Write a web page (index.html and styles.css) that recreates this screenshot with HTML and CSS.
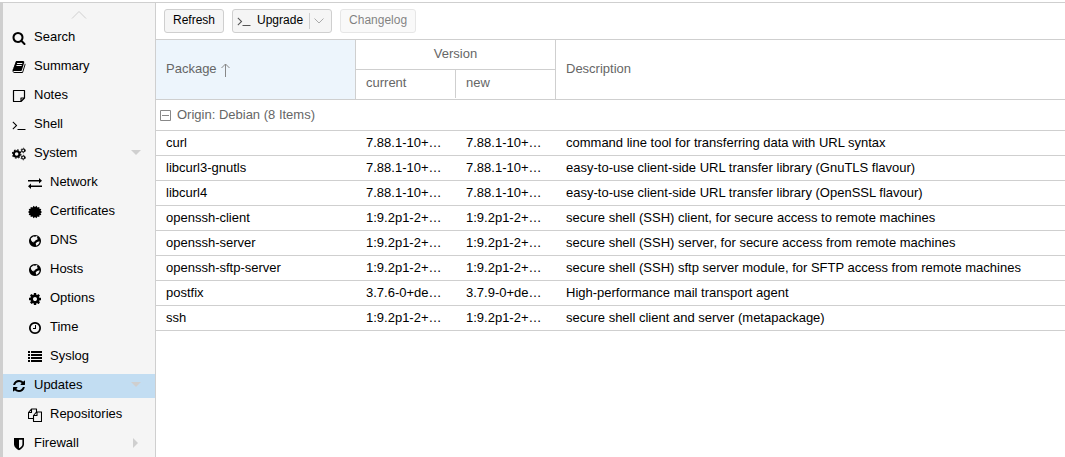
FILE: index.html
```html
<!DOCTYPE html>
<html lang="en">
<head>
<meta charset="utf-8">
<title>Updates</title>
<link rel="stylesheet" href="styles.css">
</head>
<body>
<svg class="defs" aria-hidden="true">
  <symbol id="search" viewBox="0 0 1792 1792"><path d="M1216 832q0-185-131.500-316.500t-316.500-131.500-316.500 131.500-131.500 316.500 131.500 316.500 316.500 131.500 316.500-131.500 131.500-316.500zm512 832q0 52-38 90t-90 38q-54 0-90-38l-343-342q-179 124-399 124-143 0-273.500-55.500t-225-150-150-225-55.500-273.500 55.500-273.500 150-225 225-150 273.500-55.500 273.500 55.500 225 150 150 225 55.500 273.500q0 220-124 399l343 343q37 37 37 90z"/></symbol>
  <symbol id="book" viewBox="0 0 1792 1792"><path d="M1703 478q40 57 18 129l-275 906q-19 64-76.500 107.500t-122.500 43.500h-923q-77 0-148.500-53.500t-99.500-131.500q-24-67-2-127 0-4 3-27t4-37q1-8-3-21.500t-3-19.500q2-11 8-21t16.500-23.500 16.500-23.500q23-38 45-91.500t30-91.500q3-10 .5-30t-.5-28q3-11 17-28t17-23q21-36 42-92t25-90q1-9-2.500-32t.5-28q4-13 22-30.500t22-22.500q19-26 42.500-84.500t27.500-96.500q1-8-3-25.500t-2-26.500q2-8 9-18t18-23 17-21q8-12 16.500-30.500t15-35 16-36 19.500-32 26.500-23.500 36-11.500 47.500 5.500l-1 3q38-9 51-9h761q74 0 114 56t18 130l-274 906q-36 119-71.500 153.500t-128.500 34.500h-869q-27 0-38 15-11 16-1 43 24 70 144 70h923q29 0 56-15.500t35-41.500l300-987q7-22 5-57 38 15 59 43zm-1064 2q-4 13 2 22.500t20 9.500h608q13 0 25.500-9.500t16.500-22.500l21-64q4-13-2-22.500t-20-9.500h-608q-13 0-25.500 9.500t-16.500 22.500zm-83 256q-4 13 2 22.500t20 9.500h608q13 0 25.500-9.500t16.500-22.500l21-64q4-13-2-22.500t-20-9.500h-608q-13 0-25.500 9.500t-16.500 22.500z"/></symbol>
  <symbol id="note" viewBox="0 0 14 14"><path d="M1.500 1.500h11v7.500l-3.500 3.500h-7.500zM12.500 9h-3.500v3.500" fill="none" stroke="currentColor" stroke-width="1.200" stroke-linejoin="round"/></symbol>
  <symbol id="terminal" viewBox="0 0 1792 1792"><path d="M649 983l-466 466q-10 10-23 10t-23-10l-50-50q-10-10-10-23t10-23l393-393-393-393q-10-10-10-23t10-23l50-50q10-10 23-10t23 10l466 466q10 10 10 23t-10 23zm1079 457v64q0 14-9 23t-23 9h-960q-14 0-23-9t-9-23v-64q0-14 9-23t23-9h960q14 0 23 9t9 23z"/></symbol>
  <symbol id="cogs" viewBox="0 0 15 14"><g fill="none" stroke="currentColor"><circle cx="5" cy="7" r="3" stroke-width="2.200"/><circle cx="5" cy="7" r="4.500" stroke-width="1.200" stroke-dasharray="1.770 1.764"/><circle cx="12" cy="3.200" r="1.600" stroke-width="1.200"/><circle cx="12" cy="3.200" r="2.400" stroke-width=".9" stroke-dasharray="1.260 1.253"/><circle cx="12" cy="10.800" r="1.600" stroke-width="1.200"/><circle cx="12" cy="10.800" r="2.400" stroke-width=".9" stroke-dasharray="1.260 1.253"/></g></symbol>
  <symbol id="exchange" viewBox="0 0 14 14"><path d="M0 4h11V2l3 2.800-3 2.700V5.500H0zM14 9.500H3V7.500L0 10.200 3 13v-2h11z"/></symbol>
  <symbol id="certificate" viewBox="0 0 14 14"><path d="M7 2l1.500-1.200.9 1.600 1.900-.5.100 1.900 1.900.3-.7 1.700L14 7l-1.400 1.200.7 1.700-1.900.3-.1 1.900-1.900-.5-.9 1.600L7 12l-1.500 1.200-.9-1.600-1.900.5-.1-1.900-1.900-.3.700-1.700L0 7l1.400-1.200-.7-1.700 1.900-.3.100-1.900 1.900.5.900-1.600z"/></symbol>
  <symbol id="globe" viewBox="0 0 14 14"><path fill-rule="evenodd" d="M7 1a6 6 0 1 0 .01 0zM2.800 4.500l2.500-2 2 .3 1-.8 1.400.8-.9 1 .8.700-.3 1.300-1.500.3-1 1.300-1.300.2.600 1-1.600-.7-1.300-1.300zM7.700 9.200l1.500-1.200 2.300-.8-.2 1.900-1.300 1.600-1.800 1z"/></symbol>
  <symbol id="cog" viewBox="0 0 1792 1792"><path d="M1152 896q0-106-75-181t-181-75-181 75-75 181 75 181 181 75 181-75 75-181zm512-109v222q0 12-8 23t-20 13l-185 28q-19 54-39 91 35 50 107 138 10 12 10 25t-9 23q-27 37-99 108t-94 71q-12 0-26-9l-138-108q-44 23-91 38-16 136-29 186-7 28-36 28h-222q-14 0-24.500-8.500t-11.500-21.500l-28-184q-49-16-90-37l-141 107q-10 9-25 9-14 0-25-11-126-114-165-168-7-10-7-23 0-12 8-23 15-21 51-66.500t54-70.500q-27-50-41-99l-183-27q-13-2-21-12.500t-8-23.500v-222q0-12 8-23t19-13l186-28q14-46 39-92-40-57-107-138-10-12-10-24 0-10 9-23 26-36 98.500-107.500t94.500-71.500q13 0 26 10l138 107q44-23 91-38 16-136 29-186 7-28 36-28h222q14 0 24.500 8.500t11.500 21.500l28 184q49 16 90 37l142-107q9-9 24-9 13 0 25 10 129 119 165 170 7 8 7 22 0 12-8 23-15 21-51 66.500t-54 70.500q26 50 41 98l183 28q13 2 21 12.500t8 23.500z"/></symbol>
  <symbol id="clock" viewBox="0 0 1792 1792"><path d="M1024 544v448q0 14-9 23t-23 9h-320q-14 0-23-9t-9-23v-64q0-14 9-23t23-9h224v-352q0-14 9-23t23-9h64q14 0 23 9t9 23zm416 352q0-148-73-273t-198-198-273-73-273 73-198 198-73 273 73 273 198 198 273 73 273-73 198-198 73-273zm224 0q0 209-103 385.500t-279.500 279.500-385.500 103-385.500-103-279.500-279.500-103-385.500 103-385.500 279.500-279.500 385.500-103 385.500 103 279.500 279.500 103 385.500z"/></symbol>
  <symbol id="list" viewBox="0 0 14 14"><path d="M0 1h2v2H0zM3 1h11v2H3zM0 4h2v2H0zM3 4h11v2H3zM0 7h2v2H0zM3 7h11v2H3zM0 10h2v2H0zM3 10h11v2H3z"/></symbol>
  <symbol id="refresh" viewBox="0 0 1792 1792"><path d="M1639 1056q0 5-1 7-64 268-268 434.500t-478 166.500q-146 0-282.500-55t-243.500-157l-129 129q-19 19-45 19t-45-19-19-45v-448q0-26 19-45t45-19h448q26 0 45 19t19 45-19 45l-137 137q71 66 161 102t187 36q134 0 250-65t186-179q11-17 53-117 8-23 30-23h192q13 0 22.500 9.500t9.500 22.500zm25-800v448q0 26-19 45t-45 19h-448q-26 0-45-19t-19-45 19-45l138-138q-148-137-349-137-134 0-250 65t-186 179q-11 17-53 117-8 23-30 23h-199q-13 0-22.500-9.500t-9.500-22.500v-7q65-268 270-434.500t480-166.500q146 0 284 55.500t245 156.500l130-129q19-19 45-19t45 19 19 45z"/></symbol>
  <symbol id="files" viewBox="0 0 14 14"><path d="M5.500 10.500h-5v-6l3-3.500h5v3M.5 4.500h3V1M5.500 7.500l3-3.500h5v9.500h-8zM5.500 7.500h3.500V4" fill="none" stroke="currentColor" stroke-width="1.100" stroke-linejoin="round"/></symbol>
  <symbol id="shield" viewBox="0 0 14 14"><path fill-rule="evenodd" d="M2 1h10v6.500c0 2.500-2.500 4.500-5 5.800C4.500 12 2 10 2 7.500zM7 2.700v8.600c1.800-1.100 3.400-2.400 3.400-4V2.700z"/></symbol>
</svg>

<div class="app">
  <nav class="sidebar" aria-label="Node">
    <button class="scroll-up" aria-label="Scroll up"><svg viewBox="0 0 16 9"><path d="M1 8.500l7-7 7 7" fill="none" stroke="currentColor"/></svg></button>
    <ul class="tree">
      <li><a class="item" href="#search-page"><svg class="icon"><use href="#search"/></svg><span>Search</span></a></li>
      <li><a class="item" href="#summary"><svg class="icon"><use href="#book"/></svg><span>Summary</span></a></li>
      <li><a class="item" href="#notes"><svg class="icon"><use href="#note"/></svg><span>Notes</span></a></li>
      <li><a class="item" href="#shell"><svg class="icon"><use href="#terminal"/></svg><span>Shell</span></a></li>
      <li><a class="item" href="#system"><svg class="icon"><use href="#cogs"/></svg><span>System</span><i class="caret down"></i></a></li>
      <li><a class="item child" href="#network"><svg class="icon"><use href="#exchange"/></svg><span>Network</span></a></li>
      <li><a class="item child" href="#certificates"><svg class="icon"><use href="#certificate"/></svg><span>Certificates</span></a></li>
      <li><a class="item child" href="#dns"><svg class="icon"><use href="#globe"/></svg><span>DNS</span></a></li>
      <li><a class="item child" href="#hosts"><svg class="icon"><use href="#globe"/></svg><span>Hosts</span></a></li>
      <li><a class="item child" href="#options"><svg class="icon"><use href="#cog"/></svg><span>Options</span></a></li>
      <li><a class="item child" href="#time"><svg class="icon"><use href="#clock"/></svg><span>Time</span></a></li>
      <li><a class="item child" href="#syslog"><svg class="icon"><use href="#list"/></svg><span>Syslog</span></a></li>
      <li><a class="item selected" href="#updates" aria-current="page"><svg class="icon"><use href="#refresh"/></svg><span>Updates</span><i class="caret down"></i></a></li>
      <li><a class="item child" href="#repositories"><svg class="icon"><use href="#files"/></svg><span>Repositories</span></a></li>
      <li><a class="item" href="#firewall"><svg class="icon"><use href="#shield"/></svg><span>Firewall</span><i class="caret right"></i></a></li>
    </ul>
  </nav>
  <main class="main">
    <div class="toolbar">
      <button class="btn">Refresh</button>
      <div class="btn split">
        <button class="action"><svg class="icon"><use href="#terminal"/></svg>Upgrade</button>
        <button class="more" aria-label="More upgrade options"><svg viewBox="0 0 10 6"><path d="M.5 .5l4.500 4.500 4.500-4.500" fill="none" stroke="currentColor"/></svg></button>
      </div>
      <button class="btn" disabled>Changelog</button>
    </div>
    <table class="grid">
      <colgroup><col class="c-package"><col class="c-version"><col class="c-version"><col></colgroup>
      <thead>
        <tr><th class="sorted" rowspan="2" aria-sort="ascending">Package<svg class="arrow" viewBox="0 0 9 14"><path d="M4.500 14V1M.5 5l4-4 4 4" fill="none" stroke="currentColor"/></svg></th><th class="group-title" colspan="2">Version</th><th class="last" rowspan="2">Description</th></tr>
        <tr><th class="inner">current</th><th class="sub">new</th></tr>
      </thead>
      <tbody>
        <tr class="group"><td colspan="4"><button class="toggle" aria-expanded="true"><svg viewBox="0 0 11 11"><path d="M.5 .5h10v10H.5zM2 5.500h7" fill="none" stroke="currentColor"/></svg><span>Origin: Debian (8 Items)</span></button></td></tr>
        <tr><td>curl</td><td>7.88.1-10+…</td><td>7.88.1-10+…</td><td>command line tool for transferring data with URL syntax</td></tr>
        <tr><td>libcurl3-gnutls</td><td>7.88.1-10+…</td><td>7.88.1-10+…</td><td>easy-to-use client-side URL transfer library (GnuTLS flavour)</td></tr>
        <tr><td>libcurl4</td><td>7.88.1-10+…</td><td>7.88.1-10+…</td><td>easy-to-use client-side URL transfer library (OpenSSL flavour)</td></tr>
        <tr><td>openssh-client</td><td>1:9.2p1-2+…</td><td>1:9.2p1-2+…</td><td>secure shell (SSH) client, for secure access to remote machines</td></tr>
        <tr><td>openssh-server</td><td>1:9.2p1-2+…</td><td>1:9.2p1-2+…</td><td>secure shell (SSH) server, for secure access from remote machines</td></tr>
        <tr><td>openssh-sftp-server</td><td>1:9.2p1-2+…</td><td>1:9.2p1-2+…</td><td>secure shell (SSH) sftp server module, for SFTP access from remote machines</td></tr>
        <tr><td>postfix</td><td>3.7.6-0+de…</td><td>3.7.9-0+de…</td><td>High-performance mail transport agent</td></tr>
        <tr><td>ssh</td><td>1:9.2p1-2+…</td><td>1:9.2p1-2+…</td><td>secure shell client and server (metapackage)</td></tr>
      </tbody>
    </table>
  </main>
</div>
</body>
</html>
```

FILE: styles.css
```css
* { box-sizing: border-box; }

body {
  margin: 0;
  background: #fff;
  color: #000;
  font: 13px/17px "Liberation Sans", Arial, sans-serif;
  overflow: hidden;
}

button {
  margin: 0;
  padding: 0;
  border: 0;
  background: none;
  color: inherit;
  font: inherit;
}

.defs {
  display: none;
}

.icon {
  flex: none;
  width: 14px;
  height: 14px;
  fill: currentColor;
}

.app {
  display: flex;
  height: 100vh;
  margin-top: 2px;
  border-top: 1px solid #cfcfcf;
}

/* Navigation tree */
.sidebar {
  flex: none;
  width: 156px;
  border-left: 3px solid #cfcfcf;
  border-right: 1px solid #cfcfcf;
  background: #f5f5f5;
  overflow: hidden;
}

.scroll-up {
  display: flex;
  justify-content: center;
  align-items: center;
  width: 100%;
  height: 23px;
  color: #cfcfcf;
}

.scroll-up svg {
  width: 16px;
  height: 9px;
}

.tree {
  display: grid;
  gap: 5px;
  margin: 0;
  padding: 0;
  list-style: none;
}

.item {
  display: flex;
  align-items: center;
  height: 24px;
  padding: 0 14px 0 9px;
  gap: 8px;
  color: #000;
  text-decoration: none;
}

.item span {
  padding-bottom: 3px;
}

.item.child {
  padding-left: 25px;
}

.item.selected {
  background: #c2ddf2;
}

.caret {
  margin: 0 0 3px auto;
  border: 5px solid transparent;
}

.caret.down {
  border-top-color: #cfcfcf;
  border-bottom: 0;
}

.caret.right {
  margin-right: 3px;
  border-left-color: #cfcfcf;
  border-right: 0;
}

/* Toolbar */
.main {
  flex: 1;
  min-width: 0;
}

.toolbar {
  display: flex;
  align-items: center;
  gap: 8px;
  height: 36px;
  padding: 0 8px;
}

.btn {
  height: 24px;
  padding: 0 8px 2px;
  border: 1px solid #cfcfcf;
  border-radius: 3px;
  background: #f5f5f5;
  font-size: 12px;
}

.btn:disabled {
  opacity: .5;
}

.split {
  display: flex;
  padding: 0 7px 0 4px;
}

.action {
  display: flex;
  align-items: center;
  gap: 6px;
  padding: 0 6px 2px 0;
}

.action .icon {
  margin-top: 1px;
  color: #555;
}

.more {
  display: flex;
  align-items: center;
  margin: 3px 0;
  padding-left: 4px;
  border-left: 1px solid #cfcfcf;
  color: #aaa;
}

.more svg {
  width: 10px;
  height: 6px;
}

/* Package grid */
.grid {
  width: 100%;
  table-layout: fixed;
  border-top: 1px solid #cfcfcf;
  border-spacing: 0;
}

.c-package { width: 200px; }
.c-version { width: 100px; }

th {
  height: 30px;
  padding: 0 10px 2px;
  border-right: 1px solid #cfcfcf;
  border-bottom: 1px solid #cfcfcf;
  color: #666;
  font-weight: normal;
  text-align: left;
}

.sorted {
  background: #edf5fc;
}

.arrow {
  width: 9px;
  height: 14px;
  margin-left: 4px;
  vertical-align: -4px;
  color: #888;
}

.group-title {
  text-align: center;
}

.inner,
.sub {
  padding-bottom: 4px;
}

.inner {
  border-right: 0;
  background: linear-gradient(#cfcfcf, #cfcfcf) top right / 1px 28px no-repeat;
}

.last {
  border-right: 0;
}

td {
  height: 25px;
  padding: 0 10px 2px;
  border-bottom: 1px solid #cfcfcf;
  overflow: hidden;
  text-overflow: ellipsis;
  white-space: nowrap;
}

.group td {
  height: 31px;
  padding: 0 4px;
}

.toggle {
  display: flex;
  align-items: center;
  gap: 6px;
  color: #666;
}

.toggle span {
  padding-bottom: 2px;
}

.toggle svg {
  width: 11px;
  height: 11px;
  color: #888;
}
```
